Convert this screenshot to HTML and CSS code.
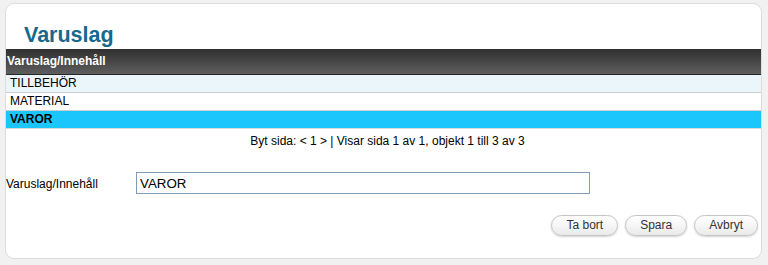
FILE: index.html
```html
<!DOCTYPE html>
<html lang="sv">
<head>
<meta charset="utf-8">
<title>Varuslag</title>
<link rel="stylesheet" href="styles.css">
</head>
<body>
<div class="card">
  <h1 class="title">Varuslag</h1>
  <div class="grid">
    <div class="grid-head">Varuslag/Innehåll</div>
    <div class="grid-row alt">TILLBEHÖR</div>
    <div class="grid-row">MATERIAL</div>
    <div class="grid-row selected">VAROR</div>
  </div>
  <div class="pager">Byt sida: &lt; 1 &gt; | Visar sida 1 av 1, objekt 1 till 3 av 3</div>
  <div class="form-row">
    <label class="form-label" for="name">Varuslag/Innehåll</label>
    <input class="form-input" id="name" type="text" value="VAROR">
  </div>
  <div class="actions">
    <button class="btn" type="button">Ta bort</button>
    <button class="btn" type="button">Spara</button>
    <button class="btn" type="button">Avbryt</button>
  </div>
</div>
</body>
</html>
```
FILE: styles.css
```css
html, body {
  margin: 0;
  padding: 0;
}
body {
  background: #f1f1f1;
  font-family: "Liberation Sans", Arial, sans-serif;
  font-size: 12px;
  color: #000;
  padding: 3px 0 0 5px;
}
.card {
  box-sizing: border-box;
  width: 757px;
  height: 256px;
  background: #fff;
  border: 1px solid #dcdcdc;
  border-radius: 9px;
  display: flex;
  flex-direction: column;
}
.title {
  margin: 0;
  padding: 19px 0 2px 18px;
  font-size: 21.5px;
  line-height: 24px;
  font-weight: bold;
  color: #14698c;
}
.grid-head {
  height: 25px;
  line-height: 25px;
  border-bottom: 1px solid #262626;
  background: linear-gradient(#303030, #5e5e5e);
  color: #fff;
  font-weight: bold;
  padding-left: 1px;
}
.grid-row {
  height: 17px;
  line-height: 17px;
  border-bottom: 1px solid #c9cfd2;
  padding-left: 4px;
  background: #fff;
}
.grid-row.alt {
  background: #eaf6f9;
}
.grid-row.selected {
  background: #1bc6fc;
  font-weight: bold;
  border-bottom-color: #d5dadd;
}
.pager {
  padding: 4px 0 0 8px;
  line-height: 16px;
  text-align: center;
}
.form-row {
  margin-top: 23px;
  display: flex;
  align-items: baseline;
}
.form-label {
  width: 130px;
}
.form-input {
  box-sizing: border-box;
  width: 454px;
  height: 22px;
  margin: 0;
  padding: 0 3px;
  border: 1px solid #7f9db9;
  font-family: "Liberation Sans", Arial, sans-serif;
  font-size: 13.33px;
  color: #000;
  outline: none;
}
.actions {
  margin-top: 21px;
  display: flex;
  justify-content: flex-end;
  gap: 7px;
  padding-right: 3px;
}
.btn {
  box-sizing: border-box;
  height: 21px;
  padding: 0 14px;
  border: 1px solid #c4c4c4;
  border-radius: 11px;
  background: linear-gradient(#ffffff, #f6f6f6 50%, #e9e9e9);
  box-shadow: 0 1px 2px rgba(0, 0, 0, 0.18);
  font-family: "Liberation Sans", Arial, sans-serif;
  font-size: 12px;
  color: #333;
  line-height: 19px;
}
```
